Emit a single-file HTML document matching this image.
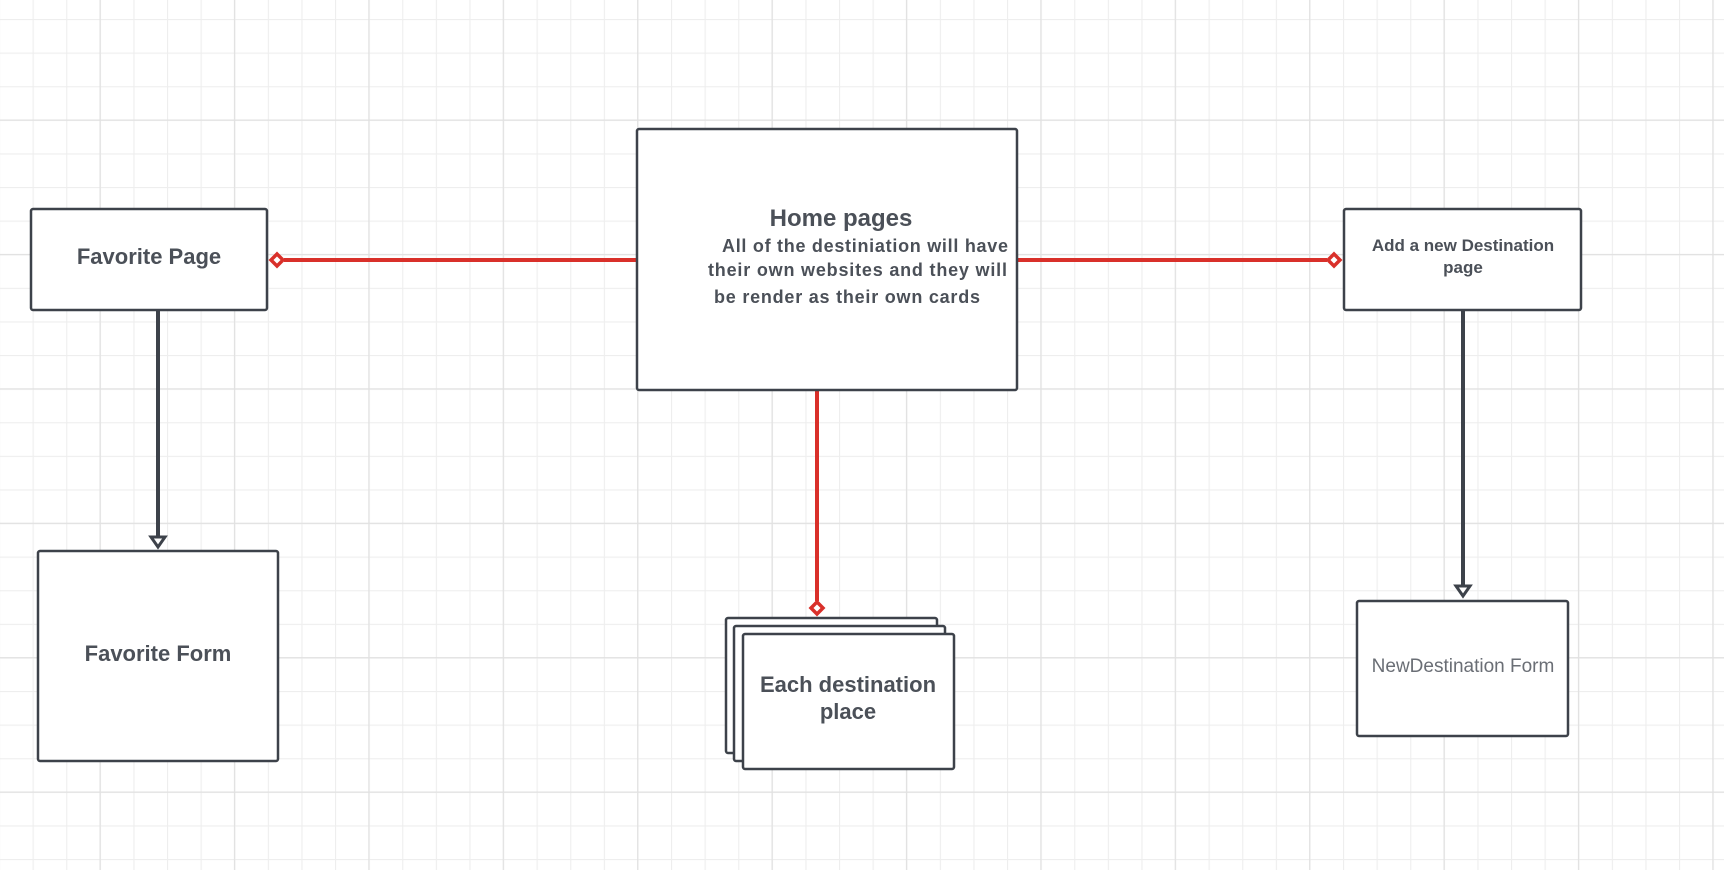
<!DOCTYPE html>
<html><head><meta charset="utf-8"><style>
html,body{margin:0;padding:0;background:#fff;}
svg{display:block;}
text{font-family:"Liberation Sans",Arial,sans-serif;fill:#4b5058;}
</style></head><body>
<svg width="1724" height="870" viewBox="0 0 1724 870" xmlns="http://www.w3.org/2000/svg">
<defs>
<pattern id="minor" x="-1" y="-14.6" width="33.6" height="33.6" patternUnits="userSpaceOnUse">
<path d="M0.5 0V33.6M0 0.5H33.6" stroke="#eeeeee" stroke-width="1.2" fill="none"/>
</pattern>
<pattern id="major" x="-34.9" y="-14.9" width="134.4" height="134.4" patternUnits="userSpaceOnUse">
<path d="M0.5 0V134.4M0 0.5H134.4" stroke="#e1e1e1" stroke-width="1.4" fill="none"/>
</pattern>
</defs>
<rect width="1724" height="870" fill="#fff"/>
<rect width="1724" height="870" fill="url(#minor)"/>
<rect width="1724" height="870" fill="url(#major)"/>

<!-- red connectors -->
<g stroke="#d9302a" stroke-width="4" fill="none">
<line x1="284" y1="260" x2="637" y2="260"/>
<line x1="1017" y1="260" x2="1327" y2="260"/>
<line x1="817" y1="390" x2="817" y2="601"/>
</g>
<g stroke="#d9302a" stroke-width="3.5" fill="#fff">
<path d="M277 254 L283 260 L277 266 L271 260 Z"/>
<path d="M1334 254 L1340 260 L1334 266 L1328 260 Z"/>
<path d="M817 602 L823 608 L817 614 L811 608 Z"/>
</g>

<!-- dark arrows -->
<g stroke="#3d424a" stroke-width="4" fill="none">
<line x1="158" y1="310" x2="158" y2="538"/>
<line x1="1463" y1="310" x2="1463" y2="587"/>
</g>
<g stroke="#3d424a" stroke-width="3" fill="#fff">
<path d="M151 537 L165 537 L158 547 Z"/>
<path d="M1456 586 L1470 586 L1463 596 Z"/>
</g>

<!-- boxes -->
<g stroke="#3d424a" stroke-width="2.5" fill="#fff">
<rect x="31" y="209" width="236" height="101" rx="2"/>
<rect x="637" y="129" width="380" height="261" rx="2"/>
<rect x="1344" y="209" width="237" height="101" rx="2"/>
<rect x="38" y="551" width="240" height="210" rx="2"/>
<rect x="1357" y="601" width="211" height="135" rx="2"/>
<rect x="726" y="618" width="211" height="135" rx="2"/>
<rect x="734" y="626" width="211" height="135" rx="2"/>
<rect x="743" y="634" width="211" height="135" rx="2"/>
</g>

<!-- text -->
<text x="149" y="264" font-size="22" font-weight="bold" text-anchor="middle">Favorite Page</text>
<text x="841" y="226" font-size="24" font-weight="bold" text-anchor="middle">Home pages</text>
<text x="722" y="252" font-size="18" font-weight="bold" textLength="286">All of the destiniation will have</text>
<text x="708" y="276" font-size="18" font-weight="bold" textLength="299">their own websites and they will</text>
<text x="714" y="303" font-size="18" font-weight="bold" textLength="266">be render as their own cards</text>
<text x="1463" y="251" font-size="17" font-weight="bold" text-anchor="middle">Add a new Destination</text>
<text x="1463" y="273" font-size="17" font-weight="bold" text-anchor="middle">page</text>
<text x="158" y="661" font-size="22" font-weight="bold" text-anchor="middle">Favorite Form</text>
<text x="848" y="692" font-size="22" font-weight="bold" text-anchor="middle">Each destination</text>
<text x="848" y="719" font-size="22" font-weight="bold" text-anchor="middle">place</text>
<text x="1463" y="672" font-size="19" text-anchor="middle" style="fill:#6a6e75">NewDestination Form</text>
</svg>
</body></html>
